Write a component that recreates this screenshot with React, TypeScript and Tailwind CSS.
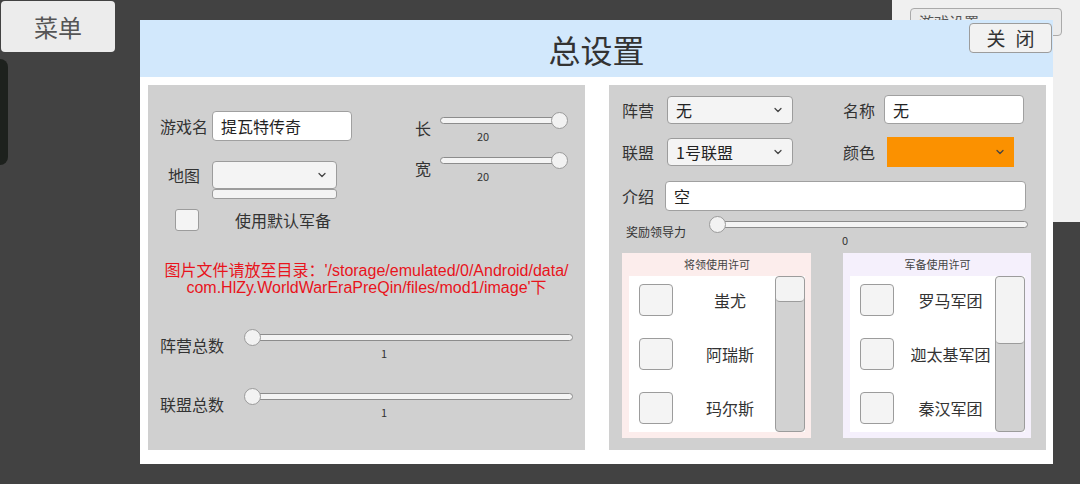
import { ChevronDown } from "lucide-react";

const cjk = "font-['Noto_Sans_CJK_SC','Noto_Sans',sans-serif]";

function Slider({
  trackClass,
  full,
  value,
  valueClass,
}: {
  trackClass: string;
  full: boolean;
  value: string;
  valueClass: string;
}) {
  return (
    <div className={`flex flex-col ${trackClass}`}>
      <div className="relative h-[17px] flex items-center">
        <div className="h-[7px] w-full rounded-full bg-[#f4f4f4] border border-[#8c8c8c]" />
        <div
          className={`absolute top-0 h-[17px] w-[17px] rounded-full bg-[#f2f2f2] border border-[#9a9a9a] ${
            full ? "right-[-1px]" : "left-[-1px]"
          }`}
        />
      </div>
      <div className={`h-[14px] text-[11px] leading-[14px] text-center text-[#333] ${valueClass}`}>{value}</div>
    </div>
  );
}

function Select({ w, h, text, orange }: { w: string; h: string; text?: string; orange?: boolean }) {
  return (
    <div
      className={`${w} ${h} flex items-center justify-between pl-2 pr-2 ${
        orange ? "bg-[#fb9100]" : "bg-[#f4f4f4] border border-[#9c9c9c] rounded-[4px]"
      }`}
    >
      <span className="text-[16px] text-[#222]">{text}</span>
      <ChevronDown size={12} strokeWidth={2.5} className="text-[#444]" />
    </div>
  );
}

function Input({ w, h, text }: { w: string; h: string; text: string }) {
  return (
    <div className={`${w} ${h} bg-white border border-[#a0a0a0] rounded-[4px] flex items-center pl-2 text-[16px] text-[#222]`}>
      {text}
    </div>
  );
}

function Permission({
  title,
  bg,
  width,
  handle,
  items,
}: {
  title: string;
  bg: string;
  width: string;
  handle: string;
  items: string[];
}) {
  return (
    <div className={`${width} h-[185px] ${bg} flex flex-col pl-[7px] pr-[6px] pb-[6px]`}>
      <div className="h-[24px] flex items-center justify-center text-[11px] text-[#444]">{title}</div>
      <div className="flex-1 bg-white flex">
        <div className="flex-1 flex flex-col pt-[8px] pl-[10px] gap-[22px]">
          {items.map((it) => (
            <div key={it} className="flex items-center h-[32px]">
              <div className="w-[34px] h-[32px] rounded-[4px] bg-[#f4f4f4] border border-[#9c9c9c]" />
              <div className="flex-1 pl-[12px] text-center text-[16px] text-[#333]">{it}</div>
            </div>
          ))}
        </div>
        <div className="w-[30px] h-[156px] rounded-[4px] bg-[#d2d2d2] border border-[#9c9c9c] flex flex-col">
          <div className={`${handle} w-full rounded-[4px] bg-[#f3f3f3] border-b border-[#9c9c9c]`} />
        </div>
      </div>
    </div>
  );
}

export default function App() {
  return (
    <div className={`relative w-[1080px] h-[484px] bg-[#424242] overflow-hidden ${cjk}`}>
      {/* background page */}
      <div className="flex justify-between h-full">
        <div className="flex flex-col">
          <button className="mt-[1px] ml-[1px] w-[114px] h-[51px] rounded-[4px] bg-[#ececec] text-[24px] text-[#555]">
            菜单
          </button>
          <div className="mt-[7px] w-[8px] h-[106px] rounded-r-lg bg-[#1d211d]" />
        </div>
        <div className="w-[188px] h-[222px] bg-[#f0f0f0] pt-[8px] pl-[18px]">
          <div className="w-[152px] h-[28px] rounded-[4px] bg-[#ebebeb] border border-[#aaa] pl-2 text-[15px] leading-[26px] text-[#555]">
            游戏设置
          </div>
        </div>
      </div>

      {/* dialog */}
      <div className="absolute left-[140px] top-[20px] w-[913px] h-[444px] bg-white flex flex-col">
        <div className="relative h-[57px] bg-[#d2e8fc] flex items-center justify-center">
          <span className="text-[32px] text-[#333]">总设置</span>
          <button className="absolute top-[3px] right-[1px] w-[83px] h-[30px] rounded-[4px] bg-[#f2f2f2] border border-[#9c9c9c] flex items-center justify-center gap-[10px] text-[19px] text-[#333]">
            <span>关</span>
            <span>闭</span>
          </button>
        </div>

        <div className="flex gap-[24px] pl-[8px] pt-[8px]">
          {/* left panel */}
          <div className="w-[437px] h-[365px] bg-[#d0d0d0] flex flex-col text-[#333]">
            <div className="flex pl-[12px]">
              <div className="w-[255px] flex flex-col">
                <div className="mt-[26px] flex items-center h-[30px]">
                  <div className="w-[48px] text-[16px]">游戏名</div>
                  <div className="ml-[4px]">
                    <Input w="w-[140px]" h="h-[30px]" text="提瓦特传奇" />
                  </div>
                </div>
                <div className="mt-[20px] flex">
                  <div className="w-[48px] h-[28px] flex items-center justify-center text-[16px]">地图</div>
                  <div className="ml-[4px] flex flex-col">
                    <Select w="w-[125px]" h="h-[28px]" />
                    <div className="w-[125px] h-[10px] rounded-[3px] bg-[#f4f4f4] border border-[#9c9c9c]" />
                  </div>
                </div>
                <div className="mt-[10px] flex items-center h-[22px]">
                  <div className="ml-[15px] w-[24px] h-[22px] rounded-[3px] bg-[#f4f4f4] border border-[#9c9c9c]" />
                  <div className="ml-[36px] text-[16px]">使用默认军备</div>
                </div>
              </div>
              <div className="flex flex-col">
                <div className="mt-[27px] flex items-center">
                  <div className="w-[25px] text-[16px]">长</div>
                  <Slider trackClass="w-[127px]" full value="20" valueClass="ml-[33px] w-[20px]" />
                </div>
                <div className="mt-[9px] flex items-center">
                  <div className="w-[25px] text-[16px]">宽</div>
                  <Slider trackClass="w-[127px]" full value="20" valueClass="ml-[33px] w-[20px]" />
                </div>
              </div>
            </div>

            <div className="mt-[31px] text-center text-[16px] leading-[17px] text-[#e8141c] font-['Liberation_Sans','Noto_Sans_CJK_SC',sans-serif]">
              图片文件请放至目录：'/storage/emulated/0/Android/data/
              <br />
              com.HlZy.WorldWarEraPreQin/files/mod1/image'下
            </div>

            <div className="mt-[33px] flex items-center pl-[12px]">
              <div className="w-[85px] text-[16px]">阵营总数</div>
              <Slider trackClass="w-[328px]" full={false} value="1" valueClass="ml-[134px] w-[10px]" />
            </div>
            <div className="mt-[28px] flex items-center pl-[12px]">
              <div className="w-[85px] text-[16px]">联盟总数</div>
              <Slider trackClass="w-[328px]" full={false} value="1" valueClass="ml-[134px] w-[10px]" />
            </div>
          </div>

          {/* right panel */}
          <div className="w-[437px] h-[365px] bg-[#d0d0d0] flex flex-col pl-[13px] pt-[10px] text-[#333]">
            <div className="flex items-center">
              <div className="w-[45px] text-[16px]">阵营</div>
              <Select w="w-[126px]" h="h-[28px]" text="无" />
              <div className="ml-[50px] w-[41px] text-[16px]">名称</div>
              <Input w="w-[140px]" h="h-[29px]" text="无" />
            </div>
            <div className="mt-[13px] flex items-center h-[30px]">
              <div className="w-[45px] text-[16px]">联盟</div>
              <Select w="w-[126px]" h="h-[28px]" text="1号联盟" />
              <div className="ml-[50px] w-[44px] text-[16px]">颜色</div>
              <Select w="w-[127px]" h="h-[30px]" orange />
            </div>
            <div className="mt-[14px] flex items-center">
              <div className="w-[43px] text-[16px]">介绍</div>
              <Input w="w-[361px]" h="h-[30px]" text="空" />
            </div>
            <div className="mt-[5px] flex items-center">
              <div className="ml-[4px] w-[84px] text-[12px] text-[#333]">奖励领导力</div>
              <Slider trackClass="w-[318px]" full={false} value="0" valueClass="ml-[130px] w-[10px]" />
            </div>
            <div className="mt-[6px] flex gap-[32px]">
              <Permission
                title="将领使用许可"
                bg="bg-[#fcedec]"
                width="w-[189px]"
                handle="h-[25px]"
                items={["蚩尤", "阿瑞斯", "玛尔斯"]}
              />
              <Permission
                title="军备使用许可"
                bg="bg-[#f5f0fc]"
                width="w-[188px]"
                handle="h-[67px]"
                items={["罗马军团", "迦太基军团", "秦汉军团"]}
              />
            </div>
          </div>
        </div>
      </div>
    </div>
  );
}
